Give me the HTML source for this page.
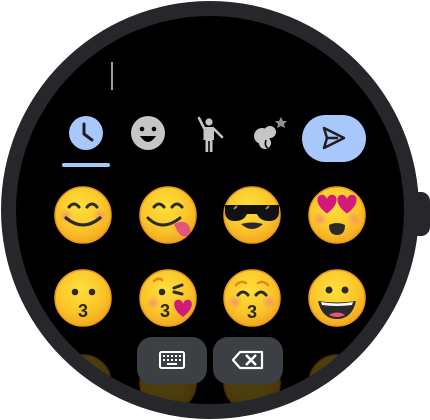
<!DOCTYPE html>
<html><head><meta charset="utf-8"><style>
html,body{margin:0;padding:0;background:#fff;width:430px;height:420px;overflow:hidden}
svg{display:block}
</style></head><body>
<svg width="430" height="420" viewBox="0 0 430 420" xmlns="http://www.w3.org/2000/svg" font-family="Liberation Sans, sans-serif">
<defs>
<radialGradient id="fy" cx="0.45" cy="0.35" r="0.7">
<stop offset="0" stop-color="#fde03a"/><stop offset="0.6" stop-color="#fbc52a"/><stop offset="1" stop-color="#f2a21e"/>
</radialGradient>
<radialGradient id="bl" cx="0.5" cy="0.5" r="0.5">
<stop offset="0" stop-color="#f48a7a" stop-opacity="0.8"/><stop offset="1" stop-color="#f48a7a" stop-opacity="0"/>
</radialGradient>
<clipPath id="ic"><circle cx="210" cy="210" r="194"/></clipPath>
<g id="face"><circle r="28" fill="url(#fy)" stroke="#e89a1a" stroke-width="1.5"/></g>
<path id="heart" d="M0,6 C-10,-1 -9,-9 -4,-9 C-2,-9 0,-7 0,-5 C0,-7 2,-9 4,-9 C9,-9 10,-1 0,6Z" fill="#d11a7a"/>
</defs>
<rect x="405" y="192" width="25" height="44" rx="9" fill="#26272b"/>
<circle cx="210" cy="210" r="209" fill="#26272b"/>
<circle cx="210" cy="210" r="194" fill="#000"/>
<rect x="111" y="62" width="2" height="28" fill="#9aa0a6"/>

<circle cx="86" cy="133" r="17" fill="#a8c7fa"/>
<path d="M84,124 V134 L92,140" stroke="#1f1f1f" stroke-width="3" fill="none" stroke-linecap="round" stroke-linejoin="round"/>
<rect x="62" y="163" width="48" height="4" rx="2" fill="#a8c7fa"/>
<circle cx="148" cy="133" r="17" fill="#c4c7c5"/>
<circle cx="142" cy="129" r="2.3" fill="#000"/><circle cx="154" cy="129" r="2.3" fill="#000"/>
<path d="M140,136 Q148,148 156,136 Z" fill="#000"/>
<circle cx="209" cy="122" r="3.6" fill="#c4c7c5"/>
<path d="M199,118 L204,128 M214,129 L222,137" stroke="#c4c7c5" stroke-width="2.6" fill="none" stroke-linecap="round"/>
<path d="M203.5,127 H214 V140 H212.5 V152 H209.8 V141 H208.2 V152 H205.5 V140 H203.5 Z" fill="#c4c7c5"/>
<g fill="#c4c7c5">
<circle cx="262" cy="136" r="8"/><circle cx="270" cy="132" r="6"/><circle cx="265" cy="143" r="6"/>
<path d="M281,117 l2,4 4,0 -3,3 1,4 -4,-2 -4,2 1,-4 -3,-3 4,0z" fill="#8e918f"/>
</g>
<path d="M266,140 q-2,6 2,8" stroke="#000" stroke-width="1.5" fill="none"/>
<rect x="302" y="115" width="64" height="47" rx="23.5" fill="#a8c7fa"/>
<path d="M324,128 L344,138 L324,148 L327,138 Z M327,138 H338" stroke="#1f1f1f" stroke-width="2.5" fill="none" stroke-linejoin="round"/>

<g clip-path="url(#ic)">
<g opacity="0.3">
<use href="#face" x="83" y="383"/><use href="#face" x="168" y="383"/><use href="#face" x="252" y="383"/><use href="#face" x="337" y="383"/>
</g>
</g>

<g transform="translate(83,215)">
<use href="#face"/>
<circle cx="-17" cy="1" r="7" fill="url(#bl)"/><circle cx="17" cy="1" r="7" fill="url(#bl)"/>
<path d="M-14,-8 q5,-6 10,0 M4,-8 q5,-6 10,0" stroke="#2a2a2a" stroke-width="3" fill="none" stroke-linecap="round"/>
<path d="M-17,3 q17,14 34,0" stroke="#2a2a2a" stroke-width="3.2" fill="none" stroke-linecap="round"/>
</g>
<g transform="translate(168,215)">
<use href="#face"/>
<path d="M-14,-8 q5,-6 10,0 M4,-8 q5,-6 10,0" stroke="#2a2a2a" stroke-width="3" fill="none" stroke-linecap="round"/>
<path d="M-20,3 q14,14 32,0" stroke="#2a2a2a" stroke-width="3" fill="none" stroke-linecap="round"/>
<path d="M6,9 q12,-6 16,4 q2,10 -8,8 q-4,-2 -8,-12z" fill="#e5567a"/>
</g>
<g transform="translate(252,215)">
<use href="#face"/>
<path d="M-27,-10 H27 V-2 q-1,8 -10,8 q-9,0 -12,-7 H-5 q-3,7 -12,7 q-9,0 -10,-8Z" fill="#111"/>
<path d="M-18,-6 l3,-3 M14,-6 l3,-3" stroke="#888" stroke-width="2"/>
<path d="M-11,9 q11,10 22,0 q-11,-3 -22,0Z" fill="#2a2a2a"/>
</g>
<g transform="translate(337,215)">
<use href="#face"/>
<circle cx="-17" cy="4" r="7" fill="url(#bl)"/><circle cx="17" cy="4" r="7" fill="url(#bl)"/>
<g transform="translate(-10,-9) scale(1.25)"><use href="#heart"/></g>
<g transform="translate(10,-9) scale(1.25)"><use href="#heart"/></g>
<path d="M-8,10 q8,-4 16,0 q0,10 -8,10 q-8,0 -8,-10Z" fill="#2a2a2a"/>
</g>

<g transform="translate(83,298)">
<use href="#face"/>
<circle cx="-8" cy="-6" r="3.3" fill="#2a2a2a"/><circle cx="9" cy="-6" r="3.3" fill="#2a2a2a"/>
<text x="-5" y="19" font-size="18" font-weight="bold" fill="#2a2a2a">3</text>
</g>
<g transform="translate(168,298)">
<use href="#face"/>
<circle cx="-15" cy="5" r="7" fill="url(#bl)"/>
<path d="M-14,-17 q5,-4 8,-1" stroke="#e8841a" stroke-width="2.5" fill="none" stroke-linecap="round"/>
<circle cx="-6" cy="-6" r="3.3" fill="#2a2a2a"/>
<path d="M6,-10 l8,-3 M6,-6 l8,2" stroke="#2a2a2a" stroke-width="3" stroke-linecap="round"/>
<text x="-8" y="19" font-size="18" font-weight="bold" fill="#2a2a2a">3</text>
<g transform="translate(15,12) scale(1.15)"><use href="#heart"/></g>
</g>
<g transform="translate(252,298)">
<use href="#face"/>
<circle cx="-17" cy="4" r="7" fill="url(#bl)"/><circle cx="17" cy="4" r="7" fill="url(#bl)"/>
<path d="M-16,-13 q5,-5 10,-2 M6,-15 q5,-3 10,2" stroke="#e8841a" stroke-width="2.5" fill="none" stroke-linecap="round"/>
<path d="M-14,-3 q5,-6 10,0 M4,-3 q5,-6 10,0" stroke="#2a2a2a" stroke-width="3" fill="none" stroke-linecap="round"/>
<text x="-5" y="20" font-size="18" font-weight="bold" fill="#2a2a2a">3</text>
</g>
<g transform="translate(337,298)">
<use href="#face"/>
<circle cx="-8" cy="-8" r="3.5" fill="#2a2a2a"/><circle cx="8" cy="-8" r="3.5" fill="#2a2a2a"/>
<path d="M-19,3 q19,3 38,0 q-4,18 -19,18 q-15,0 -19,-18Z" fill="#2a2a2a"/>
<path d="M-16,4 q16,3 32,0 l-1,3 q-15,2 -30,0Z" fill="#fff"/>
<path d="M-8,17 q8,-5 16,0 q-8,4 -16,0Z" fill="#e5567a"/>
</g>

<rect x="137" y="337" width="70" height="47" rx="15" fill="#3c3f43"/>
<rect x="213" y="337" width="70" height="47" rx="15" fill="#3c3f43"/>
<rect x="160" y="352" width="24" height="16" rx="1.5" fill="none" stroke="#fff" stroke-width="2"/>
<g fill="#fff">
<rect x="163" y="355" width="2" height="2"/><rect x="167" y="355" width="2" height="2"/><rect x="171" y="355" width="2" height="2"/><rect x="175" y="355" width="2" height="2"/><rect x="179" y="355" width="2" height="2"/>
<rect x="163" y="359" width="2" height="2"/><rect x="167" y="359" width="2" height="2"/><rect x="171" y="359" width="2" height="2"/><rect x="175" y="359" width="2" height="2"/><rect x="179" y="359" width="2" height="2"/>
<rect x="167" y="363" width="10" height="2"/>
</g>
<path d="M240,352 H262 V368 H240 L233,360 Z" fill="none" stroke="#fff" stroke-width="2.2" stroke-linejoin="round"/>
<path d="M246,355 L256,365 M256,355 L246,365" stroke="#fff" stroke-width="2.4"/>
</svg>
</body></html>
